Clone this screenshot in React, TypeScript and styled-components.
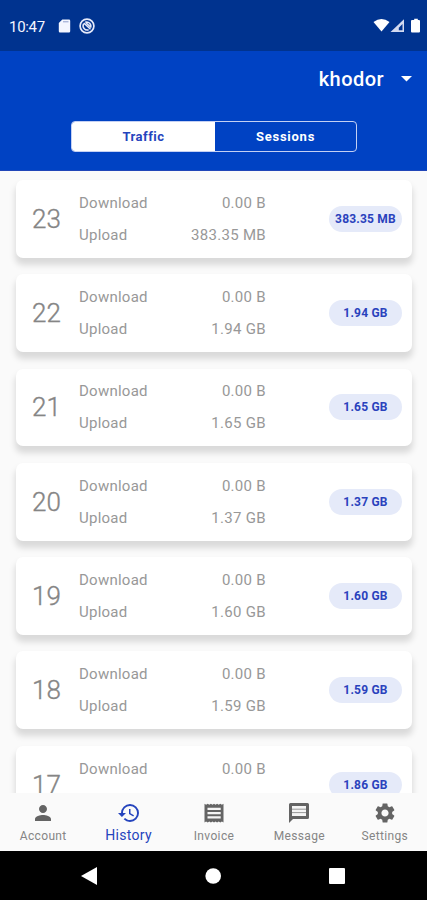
import React from 'react';
import styled, { createGlobalStyle } from 'styled-components';
import { MdPerson, MdHistory, MdSettings } from 'react-icons/md';

const GlobalStyle = createGlobalStyle`
  * { box-sizing: border-box; }
  body { margin: 0; background: #fafafa; font-family: Roboto, sans-serif; }
`;

const Screen = styled.div`
  width: 427px;
  height: 900px;
  display: flex;
  flex-direction: column;
  overflow: hidden;
  background: #fafafa;
`;

const StatusBar = styled.div`
  flex: none;
  height: 51px;
  padding: 2px 7px 0 9px;
  display: flex;
  align-items: center;
  background: #00338f;
  color: #f4f6ff;
`;

const Clock = styled.span`
  width: 49px;
  font-size: 15px;
  line-height: 18px;
  letter-spacing: -0.3px;
`;

const StatusIcons = styled.div<{ $end?: boolean }>`
  display: flex;
  align-items: center;
  gap: ${(p) => (p.$end ? '0' : '8px')};
  margin-left: ${(p) => (p.$end ? 'auto' : '0')};
  padding-bottom: 2px;
  svg { display: block; }
`;

const Header = styled.header`
  flex: none;
  height: 120px;
  display: flex;
  flex-direction: column;
  align-items: center;
  background: #0042c3;
  border-bottom: 1px solid #2146b8;
`;

const UserSelect = styled.button`
  align-self: flex-end;
  height: 56px;
  margin-bottom: 14px;
  padding: 0 15px 0 0;
  display: flex;
  align-items: center;
  gap: 17px;
  border: 0;
  background: none;
  color: #fff;
  font: 500 20px/24px Roboto, sans-serif;
  letter-spacing: 0.45px;
`;

const Segments = styled.div`
  width: 286px;
  height: 31px;
  margin-left: 1px;
  display: flex;
  border: 1px solid #c4d0f3;
  border-radius: 4px;
  overflow: hidden;
`;

const Segment = styled.button<{ $active?: boolean }>`
  flex: ${(p) => (p.$active ? '0 0 143px' : '1')};
  border: 0;
  padding: 1px 0 0;
  background: ${(p) => (p.$active ? '#fff' : 'transparent')};
  color: ${(p) => (p.$active ? '#2544bd' : '#fff')};
  font: 700 13px/16px Roboto, sans-serif;
  letter-spacing: ${(p) => (p.$active ? '0.5px' : '0.75px')};
`;

const List = styled.main`
  flex: 1;
  min-height: 0;
  overflow: hidden;
  display: flex;
  flex-direction: column;
  gap: 16.6px;
  padding: 9px 15px 0 16px;
`;

const Card = styled.article`
  flex: none;
  height: 77.7px;
  display: grid;
  grid-template-columns: 63px 187px 1fr;
  align-items: center;
  padding-right: 10px;
  border-radius: 7px;
  background: #fff;
  box-shadow: 0 6px 6px 1px rgba(0, 0, 0, 0.13);
`;

const Day = styled.div`
  padding-left: 16px;
  color: #858585;
  font-size: 26px;
  font-weight: 300;
  line-height: 30px;
  -webkit-text-stroke: 0.35px #858585;
`;

const Usage = styled.div`
  display: flex;
  flex-direction: column;
  gap: 12px;
`;

const UsageRow = styled.div`
  display: flex;
  justify-content: space-between;
  color: #989898;
  font-size: 15px;
  line-height: 20px;
`;

const Label = styled.span`
  letter-spacing: 0.25px;
`;

const Value = styled.span`
  letter-spacing: 0.3px;
`;

const Total = styled.div`
  justify-self: end;
  width: 73px;
  height: 26px;
  display: flex;
  align-items: center;
  justify-content: center;
  border-radius: 13px;
  background: #e5eaf9;
  color: #2a42bd;
  font-size: 12px;
  font-weight: 700;
  letter-spacing: 0.2px;
  white-space: nowrap;
`;

const TabBar = styled.nav`
  flex: none;
  height: 58px;
  display: grid;
  grid-template-columns: repeat(5, 1fr);
  background: #fafafa;
  position: relative;
`;

const Tab = styled.button<{ $active?: boolean }>`
  display: flex;
  flex-direction: column;
  align-items: center;
  padding: 8px 0 0 1px;
  border: 0;
  background: none;
  color: ${(p) => (p.$active ? '#2544bd' : '#858585')};
  font: ${(p) => (p.$active ? '400 14px/20px' : '400 12px/22px')} Roboto, sans-serif;
  letter-spacing: ${(p) => (p.$active ? '0.3px' : '0.35px')};
  svg { display: block; flex: none; color: ${(p) => (p.$active ? '#2544bd' : '#646464')}; }
`;

const SystemBar = styled.div`
  flex: none;
  height: 49px;
  display: flex;
  align-items: center;
  justify-content: space-between;
  padding: 0 82px 0 81px;
  background: #000;
`;

const ReceiptIcon = ({ size }: { size: number }) => (
  <svg width={size} height={size} viewBox="0 0 24 24" fill="currentColor">
    <path d="M2.500 2.800l1.600 1 1.600-1 1.600 1 1.600-1 1.600 1 1.500-1 1.500 1 1.600-1 1.600 1 1.600-1 1.600 1 1.600-1V21.500l-1.600-1-1.600 1-1.600-1-1.600 1-1.600-1-1.500 1-1.500-1-1.600 1-1.600-1-1.600 1-1.600-1-1.600 1z" />
    <path d="M5.500 6.700h13.200v2.200H5.500zM5.500 11h13.200v2.200H5.500zM5.500 15.300h13.200v2.200H5.500z" fill="#f5f5f5" />
  </svg>
);

const MessageIcon = ({ size }: { size: number }) => (
  <svg width={size} height={size} viewBox="0 0 24 24" fill="currentColor">
    <path d="M3.500 2h17A1.500 1.500 0 0 1 22 3.500v13a1.500 1.500 0 0 1-1.500 1.500H6l-4 4V3.500A1.500 1.500 0 0 1 3.500 2z" />
    <path d="M5 5h14v10H5z" fill="#f5f5f5" />
    <path d="M5 8.200h14M5 11.600h14" stroke="#999" strokeWidth="1" />
  </svg>
);

const days = [
  { day: 23, upload: '383.35 MB' },
  { day: 22, upload: '1.94 GB' },
  { day: 21, upload: '1.65 GB' },
  { day: 20, upload: '1.37 GB' },
  { day: 19, upload: '1.60 GB' },
  { day: 18, upload: '1.59 GB' },
  { day: 17, upload: '1.86 GB' },
];

const tabs = [
  { name: 'Account', Icon: MdPerson },
  { name: 'History', Icon: MdHistory },
  { name: 'Invoice', Icon: ReceiptIcon },
  { name: 'Message', Icon: MessageIcon },
  { name: 'Settings', Icon: MdSettings },
];

const SdCard = () => (
  <svg width="13" height="14" viewBox="0 0 13 14">
    <path d="M4.3 .5h6.7a1.2 1.2 0 0 1 1.2 1.2v10.6a1.2 1.2 0 0 1-1.2 1.2H2a1.2 1.2 0 0 1-1.2-1.2V4z" fill="#f4f6ff" />
    <path d="M5 2.8h5.5" stroke="#8f9fcb" strokeWidth="1" />
  </svg>
);

const SyncBadge = () => (
  <svg width="16" height="16" viewBox="0 0 16 16" fill="none" stroke="#e6eafa">
    <circle cx="8" cy="8" r="6.9" strokeWidth="1.7" />
    <path d="M9.600 11.800A4.200 4.200 0 0 1 4.600 5.800M6.200 4.200A4.200 4.200 0 0 1 11.500 9.800M4.800 5 11.500 11.300M7 4.800 11.500 9" strokeWidth="1.5" />
  </svg>
);

export default function App() {
  return (
    <Screen>
      <GlobalStyle />
      <StatusBar>
        <Clock>10:47</Clock>
        <StatusIcons>
          <SdCard />
          <SyncBadge />
        </StatusIcons>
        <StatusIcons $end>
          <svg width="47" height="16" viewBox="0 0 47 16">
            <path d="M0.500 4Q8.500 -2 16.500 4L8.500 13.500z" fill="#fff" />
            <path d="M31 1.200V14H17.500z" fill="#d3daf0" />
            <path d="M29.500 6v6.300h-3.700V9.800z" fill="#00338f" />
            <path d="M39 2h2.200V.8h3.600V2H46a1 1 0 0 1 1 1v10.500a1 1 0 0 1-1 1h-7a1 1 0 0 1-1-1V3a1 1 0 0 1 1-1z" fill="#fff" />
          </svg>
        </StatusIcons>
      </StatusBar>
      <Header>
        <UserSelect>
          khodor
          <svg width="11" height="6" viewBox="0 0 11 6"><path d="M0 0h11L5.500 5.500z" fill="#fff" /></svg>
        </UserSelect>
        <Segments>
          <Segment $active>Traffic</Segment>
          <Segment>Sessions</Segment>
        </Segments>
      </Header>
      <List>
        {days.map(({ day, upload }) => (
          <Card key={day}>
            <Day>{day}</Day>
            <Usage>
              <UsageRow><Label>Download</Label><Value>0.00 B</Value></UsageRow>
              <UsageRow><Label>Upload</Label><Value>{upload}</Value></UsageRow>
            </Usage>
            <Total>{upload}</Total>
          </Card>
        ))}
      </List>
      <TabBar>
        {tabs.map(({ name, Icon }) => (
          <Tab key={name} $active={name === 'History'}>
            <Icon size={24} />
            {name}
          </Tab>
        ))}
      </TabBar>
      <SystemBar>
        <svg width="16" height="18" viewBox="0 0 16 18"><path d="M16 0v18L0 9z" fill="#fff" /></svg>
        <svg width="16" height="16" viewBox="0 0 16 16"><circle cx="8.200" cy="8" r="7.800" fill="#fff" /></svg>
        <svg width="16" height="16" viewBox="0 0 16 16"><rect width="16" height="16" rx="1" fill="#fff" /></svg>
      </SystemBar>
    </Screen>
  );
}
